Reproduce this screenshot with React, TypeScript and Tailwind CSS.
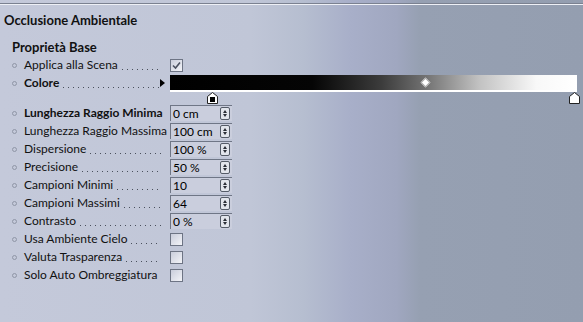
const rows: {
  label: string;
  kind: "check" | "color" | "num";
  value?: string;
  checked?: boolean;
  bold?: boolean;
  dots?: boolean;
}[] = [
  { label: "Applica alla Scena", kind: "check", checked: true, dots: true },
  { label: "Colore", kind: "color", bold: true, dots: true },
  { label: "Lunghezza Raggio Minima", kind: "num", value: "0 cm", bold: true },
  { label: "Lunghezza Raggio Massima", kind: "num", value: "100 cm" },
  { label: "Dispersione", kind: "num", value: "100 %", dots: true },
  { label: "Precisione", kind: "num", value: "50 %", dots: true },
  { label: "Campioni Minimi", kind: "num", value: "10", dots: true },
  { label: "Campioni Massimi", kind: "num", value: "64", dots: true },
  { label: "Contrasto", kind: "num", value: "0 %", dots: true },
  { label: "Usa Ambiente Cielo", kind: "check", dots: true },
  { label: "Valuta Trasparenza", kind: "check", dots: true },
  { label: "Solo Auto Ombreggiatura", kind: "check" },
];

function Spinner() {
  return (
    <div className="flex h-[13px] w-[10px] flex-col items-center justify-center gap-[1px] rounded-[2px] border border-[#555c68] bg-[#e2e5ec]">
      <div className="h-0 w-0 border-x-[2.5px] border-b-[3px] border-x-transparent border-b-[#2a2e36]" />
      <div className="h-0 w-0 border-x-[2.5px] border-t-[3px] border-x-transparent border-t-[#2a2e36]" />
    </div>
  );
}

function CheckBox({ checked }: { checked?: boolean }) {
  return (
    <div className="flex h-[13px] w-[13px] items-center justify-center border border-[#6d7484] bg-gradient-to-br from-[#c9cddb] to-[#f3f4f8]">
      {checked && (
        <svg width="9" height="9" viewBox="0 0 9 9">
          <path d="M1 4.5 L3.5 7 L8 1.5" fill="none" stroke="#4a5060" strokeWidth="1.6" />
        </svg>
      )}
    </div>
  );
}

function Field({ value }: { value: string }) {
  return (
    <div className="flex h-[16px] w-[62px] items-center justify-between border-l border-t border-[#6f7686] bg-[#cacedd] pl-[2px] pr-[2px] text-[12px] leading-none text-black">
      <span>{value}</span>
      <Spinner />
    </div>
  );
}

function Knob({ className, dark }: { className: string; dark?: boolean }) {
  return (
    <svg className={className} width="11" height="12" viewBox="0 0 11 12">
      <path d="M0.5 11.5 V4.5 L5.5 0.5 L10.5 4.5 V11.5 Z" fill="#fff" stroke="#222" />
      {dark && <rect x="3" y="5" width="5" height="5" fill="#000" />}
    </svg>
  );
}

function ColorBar() {
  return (
    <div className="relative h-[17px] w-[407px]">
      <div className="h-[17px] border-b-2 border-white bg-[linear-gradient(to_right,#000_0%,#050505_35%,#3c3c3c_52%,#737373_63%,#c2c2c2_76%,#f8f8f8_90%,#fff_100%)]" />
      <div className="absolute left-[252px] top-[4px] h-[7px] w-[7px] rotate-45 border border-[#aaa] bg-white" />
      <Knob className="absolute left-[37px] top-[17px]" dark />
      <Knob className="absolute left-[399px] top-[17px]" />
    </div>
  );
}

export default function App() {
  return (
    <div className="h-[322px] w-[583px] overflow-hidden bg-[linear-gradient(to_right,#c4c9da_0%,#c0c6d7_43%,#b6bed0_52%,#a8afc9_60%,#a0a7c0_68%,#96a0b2_72%,#949eb0_100%)] font-['Lato','Open_Sans',sans-serif] text-[12px] text-[#111]">
      <div className="mt-[3px] h-[1px] bg-[#7b8190]" />
      <div className="h-[1px] bg-[#eef0f6]" />
      <div className="pl-[4px] pt-[7px] text-[13px] font-bold leading-[16px]">Occlusione Ambientale</div>
      <div className="pl-[12px] pt-[11px] text-[13px] font-bold leading-[16px]">Proprietà Base</div>
      <div className="flex flex-col pt-[1px]">
        {rows.map((r) => (
          <div
            key={r.label}
            className={`flex h-[18px] items-center pl-[12px] ${r.kind === "color" ? "mb-[12px]" : ""}`}
          >
            <div className="h-[5px] w-[5px] rounded-full border border-[#8f96a6]" />
            <div
              className={`ml-[7px] flex h-[18px] w-[145px] items-center whitespace-nowrap ${r.bold ? "font-bold" : ""}`}
            >
              <span>{r.label}</span>
              {r.dots && (
                <div className="mb-[4px] ml-[4px] mr-[8px] h-[1px] flex-1 self-end bg-[linear-gradient(to_right,#4a505c_1px,transparent_1px)] bg-[length:5px_1px]" />
              )}
            </div>
            {r.kind === "color" ? (
              <div className="relative flex items-center pl-[1px]">
                <div className="absolute left-[-9px] top-[4px] h-0 w-0 border-y-[4px] border-l-[5px] border-y-transparent border-l-black" />
                <ColorBar />
              </div>
            ) : (
              <div className="ml-[1px]">
                {r.kind === "num" ? <Field value={r.value!} /> : <CheckBox checked={r.checked} />}
              </div>
            )}
          </div>
        ))}
      </div>
    </div>
  );
}
